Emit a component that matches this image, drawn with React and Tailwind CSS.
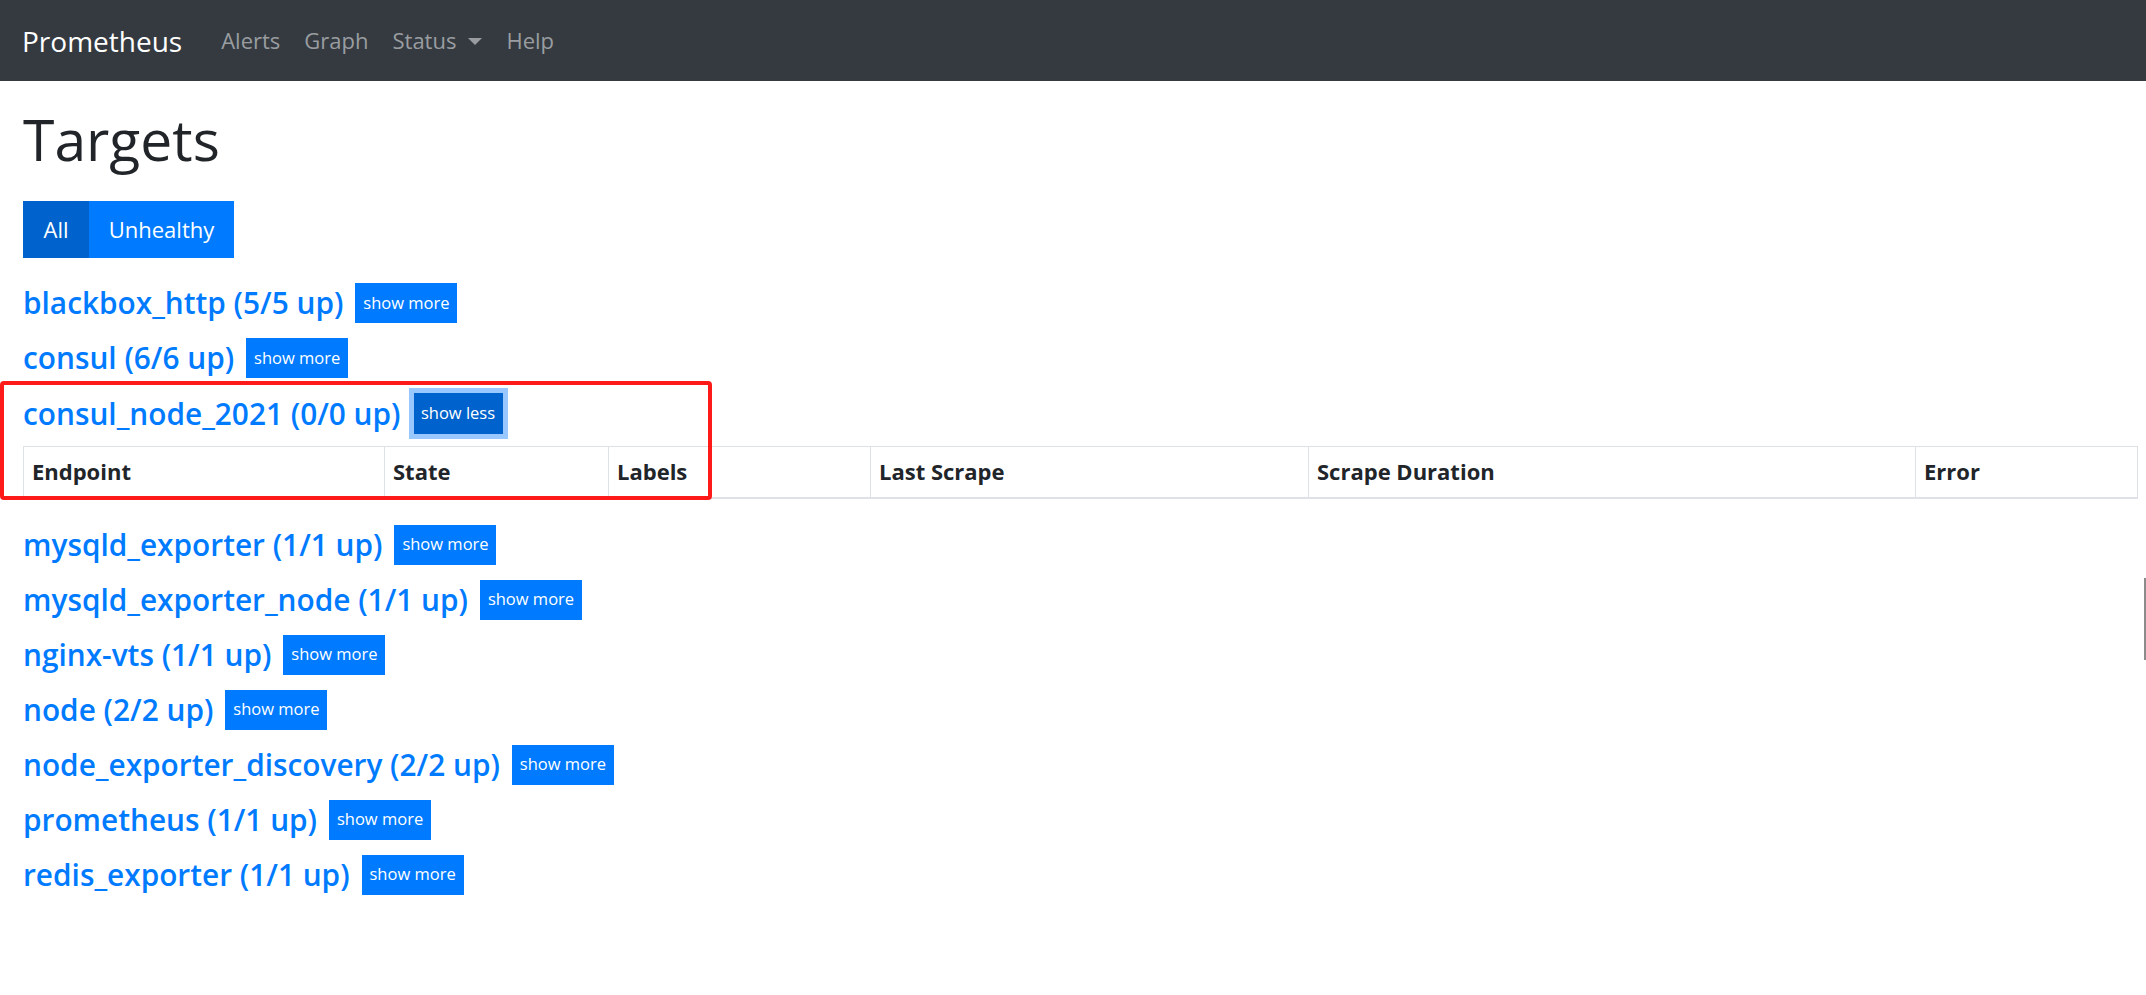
import React from "react";

const jobs1 = [
  { name: "blackbox_http (5/5 up)" },
  { name: "consul (6/6 up)" },
];
const jobs2 = [
  "mysqld_exporter (1/1 up)",
  "mysqld_exporter_node (1/1 up)",
  "nginx-vts (1/1 up)",
  "node (2/2 up)",
  "node_exporter_discovery (2/2 up)",
  "prometheus (1/1 up)",
  "redis_exporter (1/1 up)",
];

const cols = [
  { label: "Endpoint", w: "w-[361px]" },
  { label: "State", w: "w-[224px]" },
  { label: "Labels", w: "w-[262px]" },
  { label: "Last Scrape", w: "w-[438px]" },
  { label: "Scrape Duration", w: "w-[607px]" },
  { label: "Error", w: "w-[222px]" },
];

function Row({ name, children }) {
  return (
    <div className="flex items-center gap-[12px] h-[40px] mb-[15px]">
      <a className="text-[#007bff] font-semibold text-[29.8px] leading-[38px] whitespace-nowrap">
        {name}
      </a>
      {children}
    </div>
  );
}

function ShowMore() {
  return (
    <button className="h-[40px] w-[102px] bg-[#007bff] text-white text-[16.5px] leading-none">
      show more
    </button>
  );
}

export default function App() {
  return (
    <div
      className="relative min-h-[995px] bg-white text-[#212529]"
      style={{ fontFamily: '"Open Sans", "Noto Sans", sans-serif' }}
    >
      <nav className="h-[81px] bg-[#343a40] flex items-center pl-[22px]">
        <span className="text-white text-[28px] mr-[27px]">Prometheus</span>
        <a className="text-[#9a9da0] text-[22px] px-[12px]">Alerts</a>
        <a className="text-[#9a9da0] text-[22px] px-[12px]">Graph</a>
        <a className="text-[#9a9da0] text-[22px] px-[12px] flex items-center">
          Status
          <span className="ml-[12px] mt-[2px] w-0 h-0 border-l-[7px] border-r-[7px] border-t-[7px] border-l-transparent border-r-transparent border-t-[#9a9da0]" />
        </a>
        <a className="text-[#9a9da0] text-[22px] px-[12px]">Help</a>
      </nav>

      <main className="px-[23px]">
        <h1 className="text-[57px] leading-none font-normal mt-[30px] mb-[33px]">Targets</h1>

        <div className="flex h-[57px] mb-[25px]">
          <button className="w-[66px] bg-[#0062cc] text-white text-[22px]">All</button>
          <button className="w-[145px] bg-[#007bff] text-white text-[22px]">Unhealthy</button>
        </div>

        {jobs1.map((j) => (
          <Row key={j.name} name={j.name}>
            <ShowMore />
          </Row>
        ))}

        <div className="flex items-center gap-[13px] h-[41px] mb-[12px]">
          <a className="text-[#007bff] font-semibold text-[29.8px] leading-[38px] whitespace-nowrap">
            consul_node_2021 (0/0 up)
          </a>
          <button className="h-[41px] w-[89px] bg-[#0062cc] text-white text-[16.5px] leading-none ring-[5px] ring-[#98c8ff]">
            show less
          </button>
        </div>

        <table className="w-[2114px] border-collapse mb-[26px] table-fixed">
          <thead>
            <tr>
              {cols.map((c) => (
                <th
                  key={c.label}
                  className={`${c.w} h-[51px] border border-[#dee2e6] border-b-2 text-left align-middle px-[8px] text-[22px] font-bold text-[#212529]`}
                >
                  {c.label}
                </th>
              ))}
            </tr>
          </thead>
        </table>

        {jobs2.map((n) => (
          <Row key={n} name={n}>
            <ShowMore />
          </Row>
        ))}
      </main>

      <div className="absolute left-0 top-[381px] w-[712px] h-[119px] border-4 border-[#ff1a1a] rounded-[4px] pointer-events-none" />
      <div className="absolute right-0 top-[578px] w-[2px] h-[82px] bg-[#8c8c8c]" />
    </div>
  );
}
